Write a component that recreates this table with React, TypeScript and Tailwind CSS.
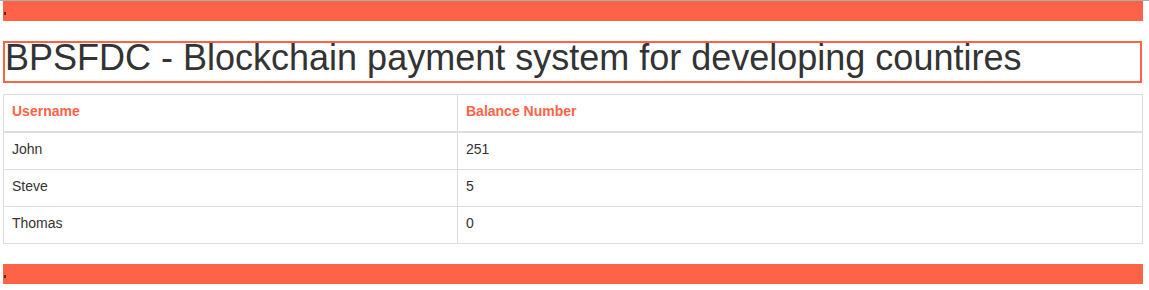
const USERS = [
  { name: "John", balance: 251 },
  { name: "Steve", balance: 5 },
  { name: "Thomas", balance: 0 },
];

function Bar() {
  return (
    <div className="h-[20px] w-[1140px] bg-[#ff6347] pl-[1px] pt-[11px]">
      <span className="block h-[3px] w-[2px] bg-[#5a2a20]" />
    </div>
  );
}

export default function App() {
  return (
    <div
      className="min-h-[290px] border-t border-[#acacac] bg-white pl-[3px] text-[#333]"
      style={{ fontFamily: '"Liberation Sans", Arial, sans-serif' }}
    >
      <Bar />

      <h1 className="mt-[20px] h-[42px] w-[1139px] border-2 border-[#ff6347] pb-[8px] text-[36px] font-normal leading-[30px] text-[#333]">
        BPSFDC - Blockchain payment system for developing countires
      </h1>

      <table className="mt-[11px] w-[1140px] border-collapse border border-[#ddd] text-[14px] leading-[20px]">
        <thead>
          <tr>
            <th className="w-[454px] border border-b-2 border-[#ddd] px-[8px] pt-[6px] pb-[10px] text-left font-bold text-[#ff6347]">
              Username
            </th>
            <th className="border border-b-2 border-[#ddd] px-[8px] pt-[6px] pb-[10px] text-left font-bold text-[#ff6347]">
              Balance Number
            </th>
          </tr>
        </thead>
        <tbody>
          {USERS.map((u) => (
            <tr key={u.name}>
              <td className="border border-[#ddd] px-[8px] pt-[6px] pb-[10px]">{u.name}</td>
              <td className="border border-[#ddd] px-[8px] pt-[6px] pb-[10px]">{u.balance}</td>
            </tr>
          ))}
        </tbody>
      </table>

      <div className="mt-[20px]">
        <Bar />
      </div>
    </div>
  );
}
